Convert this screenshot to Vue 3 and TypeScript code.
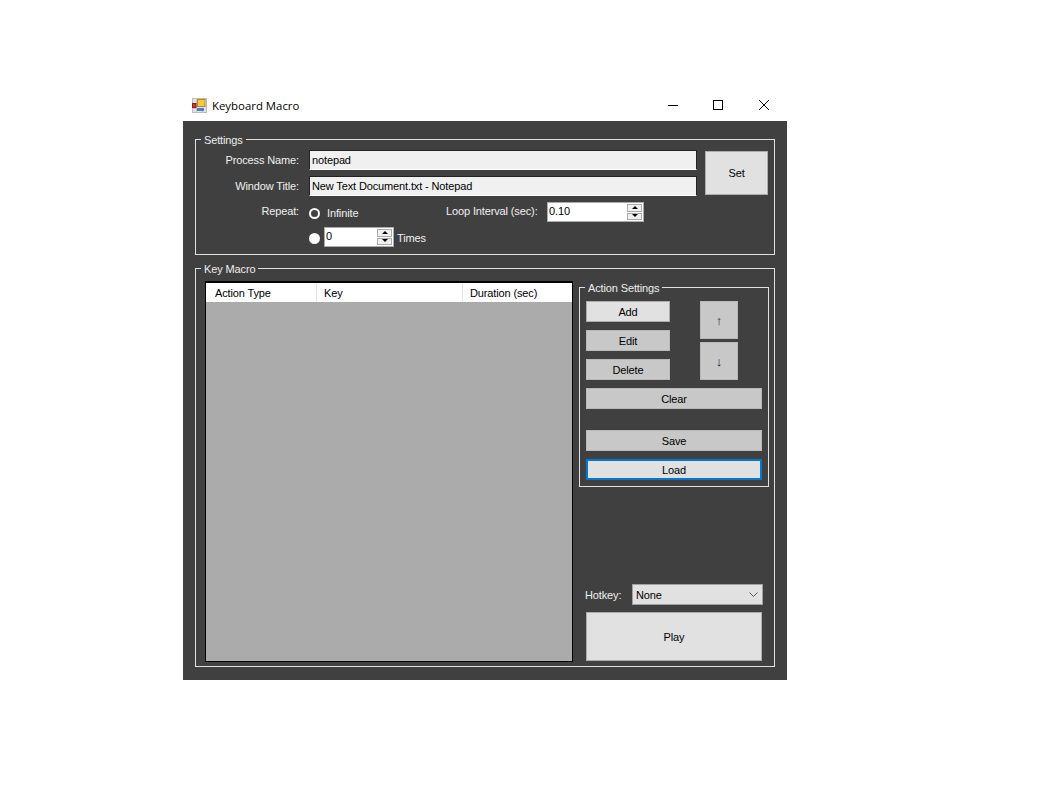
<script setup lang="ts">
// Keyboard Macro window, dark WinForms look
const columns = [
  { label: "Action Type", width: 111, pad: 9 },
  { label: "Key", width: 146, pad: 7 },
  { label: "Duration (sec)", width: 107, pad: 7 },
];
</script>

<template>
  <div class="window">
    <header class="titlebar">
      <svg class="app-icon" width="16" height="16" viewBox="0 0 16 16">
        <rect x="0.5" y="0.5" width="14" height="14" fill="#e4e4e4" stroke="#bcbcbc" />
        <path d="M0 10.5H5M4.5 1V15M10.5 10V15" stroke="#c4c4c4" fill="none" />
        <rect x="5.5" y="1.5" width="7.5" height="7" fill="#f6c945" stroke="#b98a1c" />
        <rect x="0.5" y="5.5" width="3.5" height="4" fill="#d8342c" stroke="#8c1f1a" />
        <rect x="5" y="10" width="7" height="3" fill="#4a7fd0" />
      </svg>
      <span class="title">Keyboard Macro</span>
      <div class="caption-btn">
        <svg width="12" height="10" viewBox="0 0 12 10"><path d="M2 5.5H12" stroke="#000" fill="none" /></svg>
      </div>
      <div class="caption-btn">
        <svg width="10" height="10" viewBox="0 0 10 10"><rect x="0.5" y="0.5" width="9" height="9" stroke="#000" fill="none" /></svg>
      </div>
      <div class="caption-btn">
        <svg width="10" height="10" viewBox="0 0 10 10"><path d="M0 0L10 10M10 0L0 10" stroke="#000" fill="none" /></svg>
      </div>
    </header>

    <main class="content">
      <fieldset class="group settings">
        <legend>Settings</legend>
        <div class="settings-top">
          <div class="fields">
            <div class="field-row">
              <span class="label">Process Name:</span>
              <div class="textbox">notepad</div>
            </div>
            <div class="field-row">
              <span class="label">Window Title:</span>
              <div class="textbox">New Text Document.txt - Notepad</div>
            </div>
          </div>
          <button class="btn light set-btn">Set</button>
        </div>
        <div class="repeat">
          <span class="label repeat-label">Repeat:</span>
          <div class="repeat-options">
            <div class="repeat-row">
              <span class="radio checked"></span>
              <span class="radio-text">Infinite</span>
              <span class="loop-label">Loop Interval (sec):</span>
              <div class="spinner loop-spin">
                <span class="spin-value">0.10</span>
                <span class="spin-btns">
                  <i class="up"></i>
                  <i class="down"></i>
                </span>
              </div>
            </div>
            <div class="repeat-row">
              <span class="radio"></span>
              <div class="spinner times-spin">
                <span class="spin-value">0</span>
                <span class="spin-btns">
                  <i class="up"></i>
                  <i class="down"></i>
                </span>
              </div>
              <span class="times-text">Times</span>
            </div>
          </div>
        </div>
      </fieldset>

      <fieldset class="group macro">
        <legend>Key Macro</legend>
        <div class="macro-body">
          <div class="table">
            <div class="thead">
              <div
                v-for="col in columns"
                :key="col.label"
                class="th"
                :style="{ width: col.width + 'px', paddingLeft: col.pad + 'px' }"
              >
                {{ col.label }}
              </div>
            </div>
          </div>

          <div class="side">
            <fieldset class="group actions">
              <legend>Action Settings</legend>
              <div class="actions-top">
                <div class="crud">
                  <button class="btn light small">Add</button>
                  <button class="btn small">Edit</button>
                  <button class="btn small">Delete</button>
                </div>
                <div class="moves">
                  <button class="btn move">↑</button>
                  <button class="btn move">↓</button>
                </div>
              </div>
              <button class="btn small wide clear">Clear</button>
              <button class="btn small wide save">Save</button>
              <button class="btn small wide load">Load</button>
            </fieldset>

            <div class="hotkey">
              <span class="hotkey-label">Hotkey:</span>
              <div class="select">
                <span>None</span>
                <svg width="9" height="5" viewBox="0 0 9 5">
                  <path d="M0.5 0.5L4.5 4.5L8.5 0.5" stroke="#555" fill="none" />
                </svg>
              </div>
            </div>
            <button class="btn light play">Play</button>
          </div>
        </div>
      </fieldset>
    </main>
  </div>
</template>

<style>
html,
body {
  margin: 0;
  background: #fff;
}
</style>

<style scoped>
.window {
  width: 604px;
  margin: 90px 0 0 183px;
  font-family: "Liberation Sans", Arial, sans-serif;
  font-size: 11px;
  letter-spacing: -0.13px;
  color: #000;
}
.titlebar {
  height: 31px;
  display: flex;
  align-items: center;
  padding-left: 9px;
  background: #fff;
}
.app-icon {
  flex: none;
  margin-right: 4px;
}
.title {
  flex: 1;
  font-family: "Open Sans", "Noto Sans", sans-serif;
  font-size: 11.4px;
  letter-spacing: 0;
}
.caption-btn {
  width: 46px;
  height: 31px;
  box-sizing: border-box;
  padding-top: 10px;
  display: flex;
  align-items: flex-start;
  justify-content: center;
}
.content {
  height: 559px;
  box-sizing: border-box;
  padding: 10px 12px 0;
  background: #404040;
  color: #f0f0f0;
}
.group {
  margin: 0;
  padding: 0;
  min-width: 0;
  border: 1px solid #e0e0e0;
}
.group legend {
  margin-left: 5px;
  padding: 0 3px;
  height: 16px;
  line-height: 18px;
  color: #eee;
}
.settings {
  height: 124px;
  box-sizing: border-box;
}
.settings-top {
  display: flex;
}
.fields {
  width: 501px;
  padding-top: 3px;
  display: flex;
  flex-direction: column;
  gap: 6px;
}
.field-row {
  display: flex;
  align-items: center;
}
.label {
  width: 103px;
  margin-right: 10px;
  text-align: right;
  flex: none;
}
.textbox {
  width: 388px;
  height: 20px;
  box-sizing: border-box;
  border: 1px solid #222;
  border-bottom-color: #fff;
  background: #f0f0f0;
  color: #000;
  padding-left: 2px;
  line-height: 18px;
}
.set-btn {
  width: 63px;
  height: 44px;
  margin: 4px 0 0 8px;
}
.btn {
  box-sizing: border-box;
  border: 1px solid #b8b8b8;
  padding: 0;
  background: #c8c8c8;
  color: #000;
  font: inherit;
  letter-spacing: inherit;
}
.btn.light {
  background: #e1e1e1;
  border-color: #adadad;
}
.repeat {
  display: flex;
  margin-top: 6px;
}
.repeat-label {
  line-height: 18px;
}
.repeat-options {
  display: flex;
  flex-direction: column;
  gap: 4px;
}
.repeat-row {
  display: flex;
  align-items: flex-start;
  height: 21px;
}
.radio {
  flex: none;
  box-sizing: border-box;
  width: 11px;
  height: 11px;
  margin-top: 6px;
  border-radius: 50%;
  background: #fafafa;
}
.radio.checked {
  background: #404040;
  border: 2.5px solid #fafafa;
}
.radio-text {
  width: 119px;
  margin-left: 7px;
  line-height: 22px;
}
.loop-label {
  width: 101px;
  line-height: 18px;
  white-space: nowrap;
}
.spinner {
  box-sizing: border-box;
  height: 20px;
  display: flex;
  border: 1px solid #ababab;
  background: #fff;
  color: #000;
  flex: none;
}
.loop-spin {
  width: 97px;
}
.times-spin {
  width: 70px;
  margin-left: 4px;
}
.spin-value {
  flex: 1;
  padding-left: 1px;
  line-height: 16px;
}
.spin-btns {
  width: 15px;
  display: flex;
  flex-direction: column;
  gap: 1px;
  padding: 1px;
}
.spin-btns i {
  flex: 1;
  background: #f0f0f0;
  border: 1px solid #aaa;
  position: relative;
}
.spin-btns i::after {
  content: "";
  position: absolute;
  left: 50%;
  top: 50%;
  margin: -2px 0 0 -3px;
  border-left: 3px solid transparent;
  border-right: 3px solid transparent;
}
.spin-btns .up::after {
  border-bottom: 3px solid #000;
}
.spin-btns .down::after {
  border-top: 3px solid #000;
}
.times-text {
  margin-left: 3px;
  line-height: 22px;
}
.macro {
  height: 407px;
  box-sizing: border-box;
  margin-top: 5px;
}
.macro-body {
  display: flex;
  padding: 3px 5px 0 9px;
  gap: 6px;
}
.table {
  width: 368px;
  height: 381px;
  margin-top: 2px;
  box-sizing: border-box;
  border: 1px solid #000;
  border-top-width: 2px;
  background: #ababab;
  color: #000;
}
.thead {
  display: flex;
  height: 19px;
  background: #fff;
}
.th {
  box-sizing: border-box;
  border-right: 1px solid #e5e5e5;
  line-height: 20px;
  white-space: nowrap;
}
.th:last-child {
  border-right: 0;
}
.side {
  width: 190px;
  display: flex;
  flex-direction: column;
}
.actions {
  height: 208px;
  box-sizing: border-box;
  padding: 0 6px;
}
.actions legend {
  margin-left: -1px;
}
.actions-top {
  display: flex;
  justify-content: space-between;
  padding-right: 24px;
}
.crud {
  display: flex;
  flex-direction: column;
  gap: 8px;
  padding-top: 6px;
}
.small {
  width: 84px;
  height: 21px;
}
.moves {
  display: flex;
  flex-direction: column;
  gap: 3px;
  padding-top: 6px;
}
.move {
  width: 38px;
  height: 38px;
  font-size: 13px;
  color: #0a2a4a;
}
.wide {
  display: block;
  width: 176px;
}
.clear {
  margin-top: 8px;
}
.save {
  margin-top: 21px;
}
.load {
  margin-top: 8px;
  background: #e1e1e1;
  border: 2px solid #0078d7;
}
.hotkey {
  display: flex;
  align-items: center;
  margin-top: 97px;
  padding-left: 6px;
}
.hotkey-label {
  width: 47px;
}
.select {
  box-sizing: border-box;
  width: 131px;
  height: 21px;
  border: 1px solid #a0a0a0;
  background: #e1e1e1;
  color: #000;
  display: flex;
  align-items: center;
  justify-content: space-between;
  padding: 0 4px 0 3px;
}
.play {
  width: 176px;
  height: 49px;
  margin: 7px 0 0 7px;
}
</style>
